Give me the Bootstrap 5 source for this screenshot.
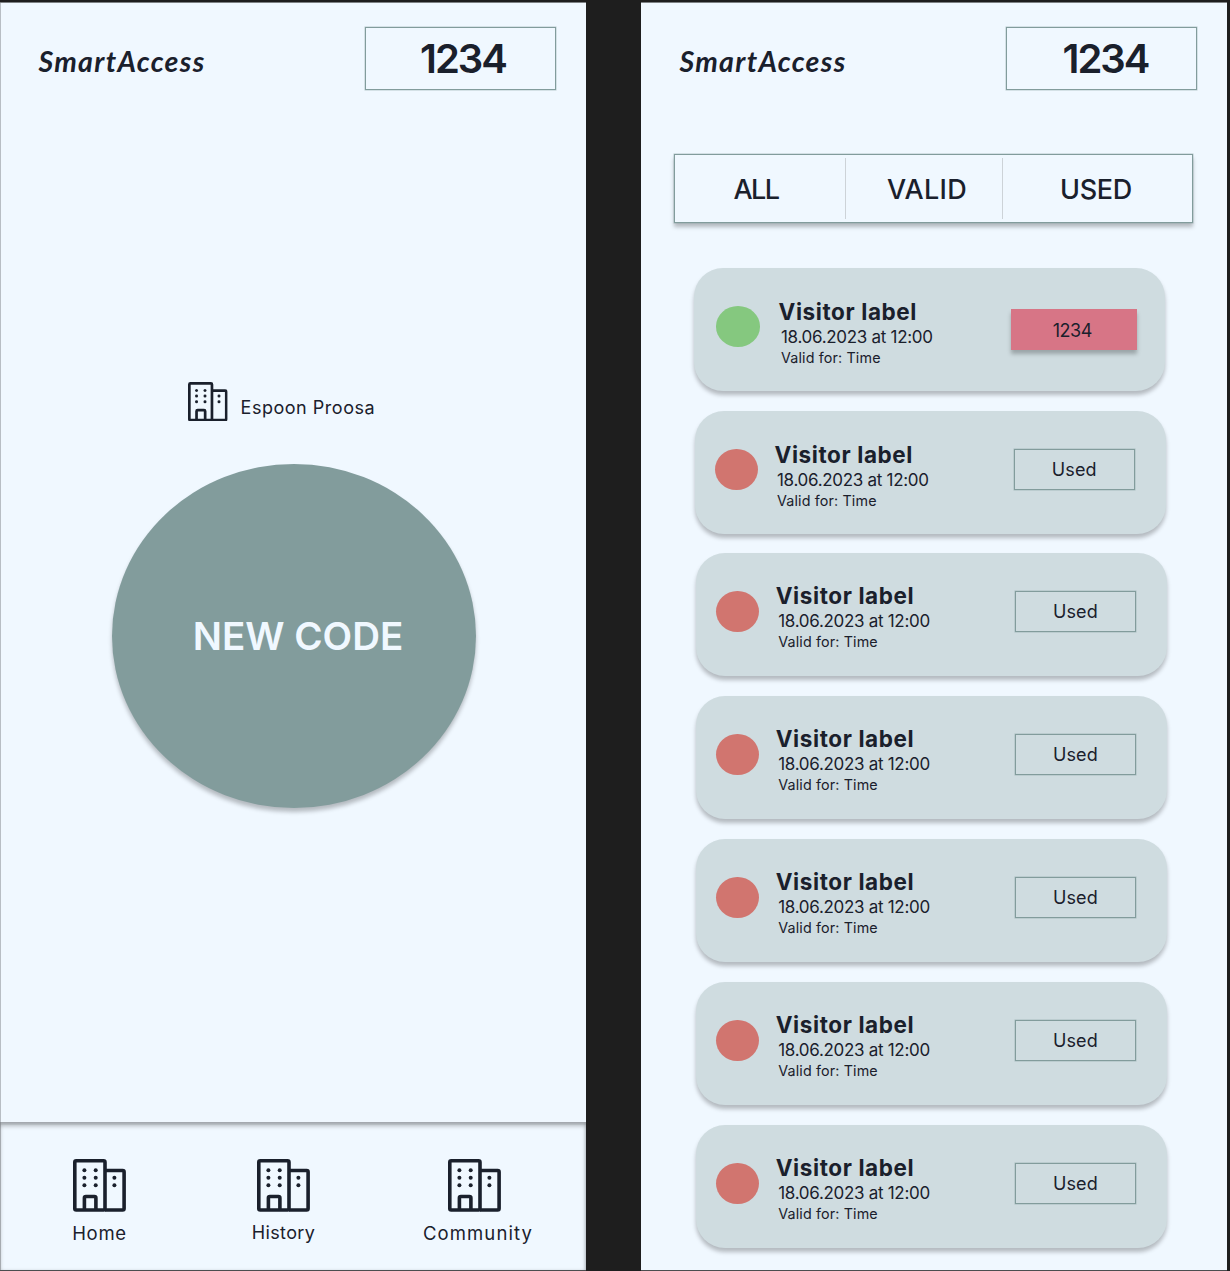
<!DOCTYPE html>
<html lang="en">
<head>
<meta charset="utf-8">
<meta name="viewport" content="width=device-width, initial-scale=1">
<title>SmartAccess</title>
<link href="https://cdn.jsdelivr.net/npm/bootstrap@5.3.0/dist/css/bootstrap.min.css" rel="stylesheet">
<style>
  body { background: #1e1e1e; color: #1a202c; font-family: Inter, "Open Sans", sans-serif; line-height: 1; width: 1230px; height: 1271px; overflow: hidden; }
  .screens { gap: 55px; padding-top: 2px; height: 1271px; }
  .screen { width: 586px; background: #f0f8ff; border-top: 1px solid #7d8184; border-bottom: 1px solid #4b4d4f; }
  .screen-home { box-shadow: inset 1px 0 #b8bec4; }
  .topbar { height: 88px; padding: 23.5px 30px 0 38.5px; }
  .brand { font: italic 700 28.5px/30px Lato, sans-serif; letter-spacing: 1.3px; padding-top: 19px; }
  .pin-box { width: 191px; height: 63.5px; border: 1px solid #829c9c; box-shadow: 0 0 0 .5px rgba(130,156,156,.5); font-size: 40px; font-weight: 600; padding: 2px 0 0 5px; letter-spacing: -2px; }
  .screen-history .pin-box { padding-left: 8px; }
  .site { padding: 291px 0 0 188.4px; height: 331px; gap: 12.5px; }
  .site svg { margin-top: -.3px; }
  .site span { font-size: 18px; line-height: 22px; margin-top: 14.5px; letter-spacing: .52px; }
  .new-code { width: 364px; height: 344px; margin: 41.5px 0 0 112px; border: 0; border-radius: 50%; background: #829c9c; color: #f0f8ff; font-size: 38.5px; font-weight: 600; box-shadow: 0 4px 4px rgba(0,0,0,.25); padding: 2px 0 0 8px; }
  .tabbar { height: 148px; box-shadow: inset 0 4px 4px rgba(0,0,0,.25), inset 1px 0 #b8bec4, inset -1px 0 3px rgba(0,0,0,.12), inset 0 3px 1px rgba(0,0,0,.06); padding: 37px 0 0 0; }
  .tabbar a { color: inherit; text-decoration: none; font-size: 18px; line-height: 22px; }
  .tabbar svg { margin-bottom: 10px; }
  .t-home { width: 199px; } .t-history { width: 169px; } .t-community { width: 213px; }
  .t-home span { font-size: 18.5px; letter-spacing: .7px; } .t-history span { letter-spacing: .35px; }
  .t-community span { font-size: 18.5px; letter-spacing: 1.1px; margin-left: 7px; }
  .filters { width: 519px; height: 69.5px; margin: 62.8px 0 0 33px; border: 1px solid #829c9c; box-shadow: 0 0 0 .5px rgba(130,156,156,.5), 0 4px 4px rgba(0,0,0,.25); font-size: 27px; font-weight: 500; padding: 3px 0; }
  .filters div + div { border-left: 1px solid #cdd3d8; }
  .filters span { padding-top: 2px; }
  .f-all { width: 170px; letter-spacing: -1.6px; padding-right: 8px; }
  .f-valid { width: 157px; letter-spacing: .3px; padding-left: 6px; }
  .f-used { width: 189px; letter-spacing: -.3px; padding-right: 2px; }
  .visits { padding: 45px 0 0 52.5px; }
  .visit { width: 471.5px; height: 123px; border-radius: 29px; background: #cfdce0; box-shadow: 0 4px 4px rgba(0,0,0,.25); margin: 0 0 20px 2.2px; padding: 38px 31px 0 20.5px; }
  .visit.is-valid-code { margin-left: 0; padding: 38px 28px 0 22px; }
  .visit.second { margin: 0 0 18.5px 1px; }
  .status { width: 42.5px; height: 41px; border-radius: 50%; background: #d1756f; }
  .is-valid-code .status { width: 44.5px; background: #85c87f; }
  .info { margin: -8.8px 0 0 17px; white-space: nowrap; }
  .is-valid-code .info { margin-left: 18.5px; }
  .info h2 { font-size: 22.5px; font-weight: 700; line-height: 28px; letter-spacing: .6px; margin: 0; }
  .info p { font-size: 17px; line-height: 22px; letter-spacing: -.3px; margin: 0 0 0 2.5px; }
  .info .duration { font-size: 14.3px; line-height: 20px; letter-spacing: .15px; }
  .state { width: 121.5px; height: 41px; border: 1px solid #829c9c; box-shadow: 0 0 0 .5px rgba(130,156,156,.5); font-size: 18px; letter-spacing: .15px; padding-top: 1px; }
  .is-valid-code .state { width: 126.5px; margin-top: 3px; border: 0; background: #d77586; box-shadow: 0 4px 4px rgba(0,0,0,.25); padding-top: 3px; padding-right: 3px; letter-spacing: -.5px; }
</style>
</head>
<body>
<svg class="d-none">
  <symbol id="building" viewBox="0 0 53 53">
    <g fill="none" stroke="#1a202c" stroke-width="3.6" stroke-linejoin="round">
      <rect x="1.8" y="1.8" width="30.2" height="49.2" rx="1.4"/>
      <path d="M32 11.5H49.6Q51.1 11.5 51.1 13V49.5Q51.1 51 49.6 51H32M11.4 51V39Q11.4 37.5 12.9 37.5H21.4Q22.9 37.5 22.9 39V51"/>
    </g>
    <g fill="#1a202c"><circle cx="11.4" cy="11.3" r="2"/><circle cx="22.7" cy="11.3" r="2"/><circle cx="11.4" cy="18.8" r="2"/><circle cx="22.7" cy="18.8" r="2"/><circle cx="11.4" cy="26.3" r="2"/><circle cx="22.7" cy="26.3" r="2"/><circle cx="41.4" cy="18.8" r="2"/><circle cx="41.4" cy="26.3" r="2"/></g>
  </symbol>
</svg>
<main class="screens d-flex">
  <section class="screen screen-home d-flex flex-column">
    <header class="topbar d-flex justify-content-between">
      <div class="brand">SmartAccess</div>
      <div class="pin-box d-flex align-items-center justify-content-center"><span>1234</span></div>
    </header>
    <div class="site d-flex align-items-start">
      <svg width="39.7" height="39.7"><use href="#building"/></svg>
      <span>Espoon Proosa</span>
    </div>
    <button class="new-code d-flex align-items-center justify-content-center" type="button"><span>NEW CODE</span></button>
    <nav class="tabbar d-flex mt-auto">
      <a class="t-home d-flex flex-column align-items-center" href="#"><svg width="53" height="53"><use href="#building"/></svg><span>Home</span></a>
      <a class="t-history d-flex flex-column align-items-center" href="#"><svg width="53" height="53"><use href="#building"/></svg><span>History</span></a>
      <a class="t-community d-flex flex-column align-items-center" href="#"><svg width="53" height="53"><use href="#building"/></svg><span>Community</span></a>
    </nav>
  </section>
  <section class="screen screen-history">
    <header class="topbar d-flex justify-content-between">
      <div class="brand">SmartAccess</div>
      <div class="pin-box d-flex align-items-center justify-content-center"><span>1234</span></div>
    </header>
    <div class="filters d-flex">
      <div class="f-all d-flex align-items-center justify-content-center"><span>ALL</span></div>
      <div class="f-valid d-flex align-items-center justify-content-center"><span>VALID</span></div>
      <div class="f-used d-flex align-items-center justify-content-center"><span>USED</span></div>
    </div>
    <div class="visits">
      <article class="visit is-valid-code d-flex align-items-start"><div class="status"></div><div class="info"><h2>Visitor label</h2><p>18.06.2023 at 12:00</p><p class="duration">Valid for: Time</p></div><div class="state ms-auto d-flex align-items-center justify-content-center"><span>1234</span></div></article>
      <article class="visit second d-flex align-items-start"><div class="status"></div><div class="info"><h2>Visitor label</h2><p>18.06.2023 at 12:00</p><p class="duration">Valid for: Time</p></div><div class="state ms-auto d-flex align-items-center justify-content-center"><span>Used</span></div></article>
      <article class="visit d-flex align-items-start"><div class="status"></div><div class="info"><h2>Visitor label</h2><p>18.06.2023 at 12:00</p><p class="duration">Valid for: Time</p></div><div class="state ms-auto d-flex align-items-center justify-content-center"><span>Used</span></div></article>
      <article class="visit d-flex align-items-start"><div class="status"></div><div class="info"><h2>Visitor label</h2><p>18.06.2023 at 12:00</p><p class="duration">Valid for: Time</p></div><div class="state ms-auto d-flex align-items-center justify-content-center"><span>Used</span></div></article>
      <article class="visit d-flex align-items-start"><div class="status"></div><div class="info"><h2>Visitor label</h2><p>18.06.2023 at 12:00</p><p class="duration">Valid for: Time</p></div><div class="state ms-auto d-flex align-items-center justify-content-center"><span>Used</span></div></article>
      <article class="visit d-flex align-items-start"><div class="status"></div><div class="info"><h2>Visitor label</h2><p>18.06.2023 at 12:00</p><p class="duration">Valid for: Time</p></div><div class="state ms-auto d-flex align-items-center justify-content-center"><span>Used</span></div></article>
      <article class="visit mb-0 d-flex align-items-start"><div class="status"></div><div class="info"><h2>Visitor label</h2><p>18.06.2023 at 12:00</p><p class="duration">Valid for: Time</p></div><div class="state ms-auto d-flex align-items-center justify-content-center"><span>Used</span></div></article>
    </div>
  </section>
</main>
<script src="https://cdn.jsdelivr.net/npm/bootstrap@5.3.0/dist/js/bootstrap.bundle.min.js"></script>
</body>
</html>
